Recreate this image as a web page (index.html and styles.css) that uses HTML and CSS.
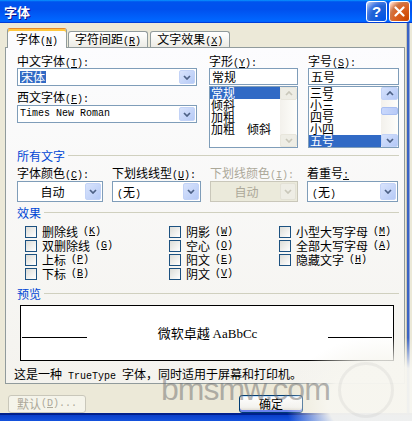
FILE: index.html
```html
<!DOCTYPE html>
<html lang="zh-CN">
<head>
<meta charset="utf-8">
<title>字体</title>
<link rel="stylesheet" href="styles.css">
</head>
<body>
<div class="window">
  <header class="titlebar">
    <span class="title">字体</span>
    <div class="caption">
      <span class="cbtn help">?</span>
      <span class="cbtn close"><svg width="11" height="11" viewBox="0 0 11 11"><path d="M1.5 1.5l8 8M9.5 1.5l-8 8" stroke="#fff" stroke-width="2.2" stroke-linecap="round"/></svg></span>
    </div>
  </header>
  <div class="frame">
    <main class="client">
      <nav class="tabs">
        <span class="tab active">字体<span class="m">(<u>N</u>)</span></span>
        <span class="tab">字符间距<span class="m">(<u>R</u>)</span></span>
        <span class="tab">文字效果<span class="m">(<u>X</u>)</span></span>
      </nav>
      <section class="panel">
        <div class="fonts">
          <div class="col-face">
            <div class="lbl">中文字体<span class="m">(<u>T</u>):</span></div>
            <div class="combo">
              <span class="val"><span class="hl">宋体</span></span>
              <span class="drop"><svg width="8" height="5" viewBox="0 0 8 5"><path d="M1 1l3 3 3-3" fill="none" stroke="currentColor" stroke-width="1.7"/></svg></span>
            </div>
            <div class="lbl second">西文字体<span class="m">(<u>F</u>):</span></div>
            <div class="combo">
              <span class="val m">Times New Roman</span>
              <span class="drop"><svg width="8" height="5" viewBox="0 0 8 5"><path d="M1 1l3 3 3-3" fill="none" stroke="currentColor" stroke-width="1.7"/></svg></span>
            </div>
          </div>
          <div class="col-style">
            <div class="lbl">字形<span class="m">(<u>Y</u>):</span></div>
            <div class="tbox">常规</div>
            <div class="listbox">
              <div class="items">
                <div class="item sel">常规</div>
                <div class="item">倾斜</div>
                <div class="item">加粗</div>
                <div class="item">加粗<span class="sp"></span>倾斜</div>
              </div>
              <div class="vs off">
                <span class="sbtn"><svg width="8" height="5" viewBox="0 0 8 5"><path d="M1 4l3-3 3 3" fill="none" stroke="currentColor" stroke-width="1.7"/></svg></span>
                <span class="track"></span>
                <span class="sbtn"><svg width="8" height="5" viewBox="0 0 8 5"><path d="M1 1l3 3 3-3" fill="none" stroke="currentColor" stroke-width="1.7"/></svg></span>
              </div>
            </div>
          </div>
          <div class="col-size">
            <div class="lbl">字号<span class="m">(<u>S</u>):</span></div>
            <div class="tbox">五号</div>
            <div class="listbox">
              <div class="items">
                <div class="item">三号</div>
                <div class="item">小三</div>
                <div class="item">四号</div>
                <div class="item">小四</div>
                <div class="item sel">五号</div>
              </div>
              <div class="vs">
                <span class="sbtn"><svg width="8" height="5" viewBox="0 0 8 5"><path d="M1 4l3-3 3 3" fill="none" stroke="currentColor" stroke-width="1.7"/></svg></span>
                <span class="track"><span class="thumb"></span></span>
                <span class="sbtn"><svg width="8" height="5" viewBox="0 0 8 5"><path d="M1 1l3 3 3-3" fill="none" stroke="currentColor" stroke-width="1.7"/></svg></span>
              </div>
            </div>
          </div>
        </div>

        <div class="group">所有文字</div>
        <div class="attrs">
          <div class="lbl">字体颜色<span class="m">(<u>C</u>):</span></div>
          <div class="lbl">下划线线型<span class="m">(<u>U</u>):</span></div>
          <div class="lbl dim">下划线颜色<span class="m">(<u>I</u>):</span></div>
          <div class="lbl">着重号<span class="m"><u>:</u></span></div>

          <div class="combo tall">
            <span class="val center">自动</span>
            <span class="drop"><svg width="8" height="5" viewBox="0 0 8 5"><path d="M1 1l3 3 3-3" fill="none" stroke="currentColor" stroke-width="1.7"/></svg></span>
          </div>
          <div class="combo tall">
            <span class="val pad"><span class="m">(</span>无<span class="m">)</span></span>
            <span class="drop"><svg width="8" height="5" viewBox="0 0 8 5"><path d="M1 1l3 3 3-3" fill="none" stroke="currentColor" stroke-width="1.7"/></svg></span>
          </div>
          <div class="combo tall off">
            <span class="val center">自动</span>
            <span class="drop"><svg width="8" height="5" viewBox="0 0 8 5"><path d="M1 1l3 3 3-3" fill="none" stroke="currentColor" stroke-width="1.7"/></svg></span>
          </div>
          <div class="combo tall">
            <span class="val pad"><span class="m">(</span>无<span class="m">)</span></span>
            <span class="drop"><svg width="8" height="5" viewBox="0 0 8 5"><path d="M1 1l3 3 3-3" fill="none" stroke="currentColor" stroke-width="1.7"/></svg></span>
          </div>
        </div>

        <div class="group">效果</div>
        <div class="effects">
          <label class="chk"><span class="box"></span>删除线<span class="m">(<u>K</u>)</span></label>
          <label class="chk"><span class="box"></span>双删除线<span class="m">(<u>G</u>)</span></label>
          <label class="chk"><span class="box"></span>上标<span class="m">(<u>P</u>)</span></label>
          <label class="chk"><span class="box"></span>下标<span class="m">(<u>B</u>)</span></label>
          <label class="chk"><span class="box"></span>阴影<span class="m">(<u>W</u>)</span></label>
          <label class="chk"><span class="box"></span>空心<span class="m">(<u>O</u>)</span></label>
          <label class="chk"><span class="box"></span>阳文<span class="m">(<u>E</u>)</span></label>
          <label class="chk"><span class="box"></span>阴文<span class="m">(<u>V</u>)</span></label>
          <label class="chk"><span class="box"></span>小型大写字母<span class="m">(<u>M</u>)</span></label>
          <label class="chk"><span class="box"></span>全部大写字母<span class="m">(<u>A</u>)</span></label>
          <label class="chk"><span class="box"></span>隐藏文字<span class="m">(<u>H</u>)</span></label>
        </div>

        <div class="group">预览</div>
        <div class="preview">
          <span class="rule left"></span>
          <span class="sample">微软卓越 <span class="latin">AaBbCc</span></span>
          <span class="rule right"></span>
        </div>
        <p class="note">这是一种<span class="m"> TrueType </span>字体，同时适用于屏幕和打印机。</p>
      </section>
      <div class="buttons">
        <span class="btn off">默认<span class="m">(<u>D</u>)...</span></span>
        <span class="btn default">确定</span>
      </div>
    </main>
    <div class="edge"></div>
  </div>
  <div class="bottom"></div>

  <div class="haze"></div>
  <div class="ring"></div>
  <div class="wm">bmsmw.com</div>
</div>
</body>
</html>
```

FILE: styles.css
```css
* { box-sizing: border-box; }
html, body { margin: 0; padding: 0; }
body {
  width: 412px;
  height: 421px;
  overflow: hidden;
  background: #ece9d8;
  font: 12px/13px "Noto Sans CJK SC", sans-serif;
  color: #000;
}
u { text-decoration: underline; text-underline-offset: 1px; }
.m { font-family: "Liberation Mono", monospace; font-size: 10px; }

.window {
  position: relative;
  width: 412px;
  height: 421px;
  overflow: hidden;
  display: flex;
  flex-direction: column;
}

/* caption bar */
.titlebar {
  flex: none;
  height: 23px;
  display: flex;
  align-items: center;
  justify-content: space-between;
  padding: 0 2px 0 4px;
  background: linear-gradient(180deg, #0997ff, #0053ee 8%, #0050ee 40%, #06f 88%, #06f 93%, #005bff 95%, #003dd7 96%, #003dd7);
}
.title {
  color: #fff;
  font-weight: 700;
  font-size: 13px;
  line-height: 16px;
  text-shadow: 1px 1px 0 #0f1089;
}
.caption { display: flex; gap: 2px; }
.cbtn {
  width: 21px;
  height: 21px;
  border: 1px solid #fff;
  border-radius: 3px;
  display: flex;
  align-items: center;
  justify-content: center;
}
.help {
  background: radial-gradient(circle at 90% 90%, #0054e9 0, #2263d5 55%, #4479e4 70%, #a3bbec 90%, #fff 100%);
  color: #fff;
  font: 700 15px/1 "Liberation Sans", sans-serif;
}
.close {
  background: radial-gradient(circle at 90% 90%, #cc4600 0, #dc6527 55%, #cd7546 70%, #ffccb2 90%, #fff 100%);
}

.frame { flex: 1; display: flex; min-height: 0; }
.client {
  width: 406px;
  flex: none;
  padding: 5px 0 0 5px;
  display: flex;
  flex-direction: column;
}
.edge {
  flex: 1;
  background: linear-gradient(90deg, #c9c6b6 0 1px, #3b63c4 1px 3px, #8fa6d8 3px 4px, #ece9d8 4px);
}
.bottom {
  flex: none;
  height: 8px;
  background: linear-gradient(#00208c 0 2px, #0a3ec8 2px, #1452dd);
}

/* tabs */
.tabs {
  display: flex;
  align-items: flex-end;
  height: 19px;
  padding-left: 2px;
  position: relative;
  z-index: 1;
}
.tab {
  height: 16px;
  padding: 0 6px;
  margin-right: 2px;
  border: 1px solid #919b9c;
  border-bottom: 0;
  border-radius: 3px 3px 0 0;
  background: linear-gradient(#fff, #fafaf8 30%, #ecebe5);
  line-height: 14px;
  white-space: nowrap;
}
.tab.active {
  height: 20px;
  margin-bottom: -1px;
  margin-right: 1px;
  padding: 3px 8px 0;
  border-top-color: #e68b2c;
  box-shadow: inset 0 2px 0 #ffc73c;
  background: #fcfcfe;
}

.panel {
  width: 400px;
  height: 337px;
  border: 1px solid #919b9c;
  background: linear-gradient(#fcfcfe, #f4f3ee);
  padding: 6px 4px 0 11px;
  display: flex;
  flex-direction: column;
}

.lbl { height: 13px; white-space: nowrap; }
.lbl.dim { color: #aca899; }

/* font / style / size columns */
.fonts { display: flex; }
.col-face { width: 180px; margin-right: 12px; }
.col-style { width: 89px; margin-right: 10px; }
.col-size { width: 91px; }
.col-face .combo { margin-top: 1px; }
.col-face .lbl.second { margin-top: 4px; }
.col-face .lbl.second + .combo { margin-top: 2px; }

.combo {
  display: flex;
  height: 18px;
  border: 1px solid #7f9db9;
  background: #fff;
  padding: 1px;
}
.combo .val {
  flex: 1;
  min-width: 0;
  padding-left: 1px;
  line-height: 14px;
  white-space: nowrap;
}
.combo .val.m { font-size: 10px; }
.combo .val.center { text-align: center; }
.combo .val.pad { padding-left: 3px; }
.hl {
  display: inline-block;
  vertical-align: top;
  margin-top: 1px;
  padding: 0 1px;
  line-height: 12px;
  background: #316ac5;
  color: #fff;
}
.drop {
  width: 16px;
  flex: none;
  border: 1px solid #c3d3f7;
  border-radius: 2px;
  background: linear-gradient(135deg, #d8e3fc, #b6caf6);
  color: #4d6185;
  display: flex;
  align-items: center;
  justify-content: center;
}
.combo.tall { height: 21px; }
.combo.tall .val { line-height: 17px; }
.combo.off { border-color: #c9c7ba; background: #ebeadb; }
.combo.off .val { color: #aca899; }
.combo.off .drop { border-color: #e3e1d6; background: #eeede5; color: #c9c7ba; }

.tbox {
  margin-top: 1px;
  height: 17px;
  border: 1px solid #7f9db9;
  background: #fff;
  padding-left: 2px;
  line-height: 15px;
}
.listbox {
  margin-top: 1px;
  height: 62px;
  border: 1px solid #7f9db9;
  background: #fff;
  display: flex;
}
.items { flex: 1; min-width: 0; }
.item { height: 12px; line-height: 12px; padding-left: 1px; white-space: nowrap; }
.item.sel { background: #316ac5; color: #fff; }
.sp { display: inline-block; width: 12px; }

.vs {
  width: 17px;
  flex: none;
  display: flex;
  flex-direction: column;
  background: linear-gradient(90deg, #f3f1ec, #fefefb);
  color: #4d6185;
}
.sbtn {
  height: 13px;
  flex: none;
  border: 1px solid #c3d3f7;
  border-radius: 2px;
  background: linear-gradient(135deg, #d6e2fc, #b4c8f6);
  display: flex;
  align-items: center;
  justify-content: center;
}
.track { flex: 1; padding-top: 7px; }
.thumb {
  display: block;
  height: 8px;
  border: 1px solid #a9bff2;
  border-radius: 2px;
  background: linear-gradient(90deg, #c9d8fc, #b8cbf7);
}
.vs.off { color: #c9c7ba; }
.vs.off .sbtn { border-color: #e8e6dc; background: #eeede5; }

/* group headings */
.group {
  display: flex;
  align-items: center;
  height: 13px;
  color: #0046d5;
  white-space: nowrap;
}
.group::after {
  content: "";
  flex: 1;
  height: 1px;
  margin-left: 3px;
  margin-right: 1px;
  background: #d0d0bf;
}
.fonts + .group { margin-top: 1px; }
.attrs + .group { margin-top: 4px; }
.effects + .group { margin-top: 6px; }

.attrs {
  margin-top: 4px;
  display: grid;
  grid-template-columns: 86px 89px 88px 91px;
  column-gap: 9px;
  row-gap: 2px;
}

.effects {
  margin-top: 6px;
  margin-left: 8px;
  display: grid;
  grid-auto-flow: column;
  grid-template-rows: repeat(4, 14px);
  grid-template-columns: 144px 110px 1fr;
}
.chk { display: flex; align-items: flex-start; gap: 5px; white-space: nowrap; line-height: 14px; }
.box {
  width: 12px;
  height: 12px;
  margin-top: 1px;
  flex: none;
  border: 1px solid #1c5180;
  background: linear-gradient(135deg, #dcdcd7, #fff);
}

.preview {
  margin-top: 5px;
  margin-left: 3px;
  width: 374px;
  height: 59px;
  border: 1px solid #000;
  background: #fff;
  display: flex;
  align-items: center;
  padding: 0 1px;
}
.rule { height: 9px; border-bottom: 1px solid #000; flex: none; }
.rule.left { width: 65px; }
.rule.right { width: 64px; }
.sample { flex: 1; text-align: center; font-size: 13px; line-height: 16px; }
.latin { font-family: "Liberation Serif", serif; font-size: 13px; }

.note { margin: 6px 0 0 -3px; line-height: 13px; white-space: nowrap; }

/* dialog buttons */
.buttons { display: flex; margin-top: 11px; padding-left: 3px; }
.btn {
  height: 18px;
  border: 1px solid #003c74;
  border-radius: 3px;
  background: linear-gradient(#fff, #f3f2ee 70%, #d6d0c5);
  display: flex;
  align-items: center;
  justify-content: center;
  line-height: 14px;
}
.btn.off {
  width: 78px;
  border-color: #c9c7ba;
  background: #f5f4ea;
  color: #aca899;
}
.btn.default {
  width: 64px;
  margin-left: 153px;
  box-shadow: inset 0 1px 0 #cee7ff, inset 0 -2px 0 #6982ee;
}

/* site watermark over the lower right corner */
.haze {
  position: absolute;
  left: 285px;
  top: 335px;
  width: 160px;
  height: 110px;
  background: radial-gradient(ellipse at 62% 62%, rgba(247, 246, 240, 0.96) 40%, rgba(247, 246, 240, 0) 70%);
}
.ring {
  position: absolute;
  left: 338px;
  top: 362px;
  width: 56px;
  height: 56px;
  border-radius: 50%;
  border: 3px solid rgba(170, 170, 170, 0.15);
}
.wm {
  position: absolute;
  left: 161px;
  top: 373px;
  font: 32px/32px "Liberation Sans", sans-serif;
  letter-spacing: -1px;
  color: rgba(110, 110, 110, 0.5);
}
```
